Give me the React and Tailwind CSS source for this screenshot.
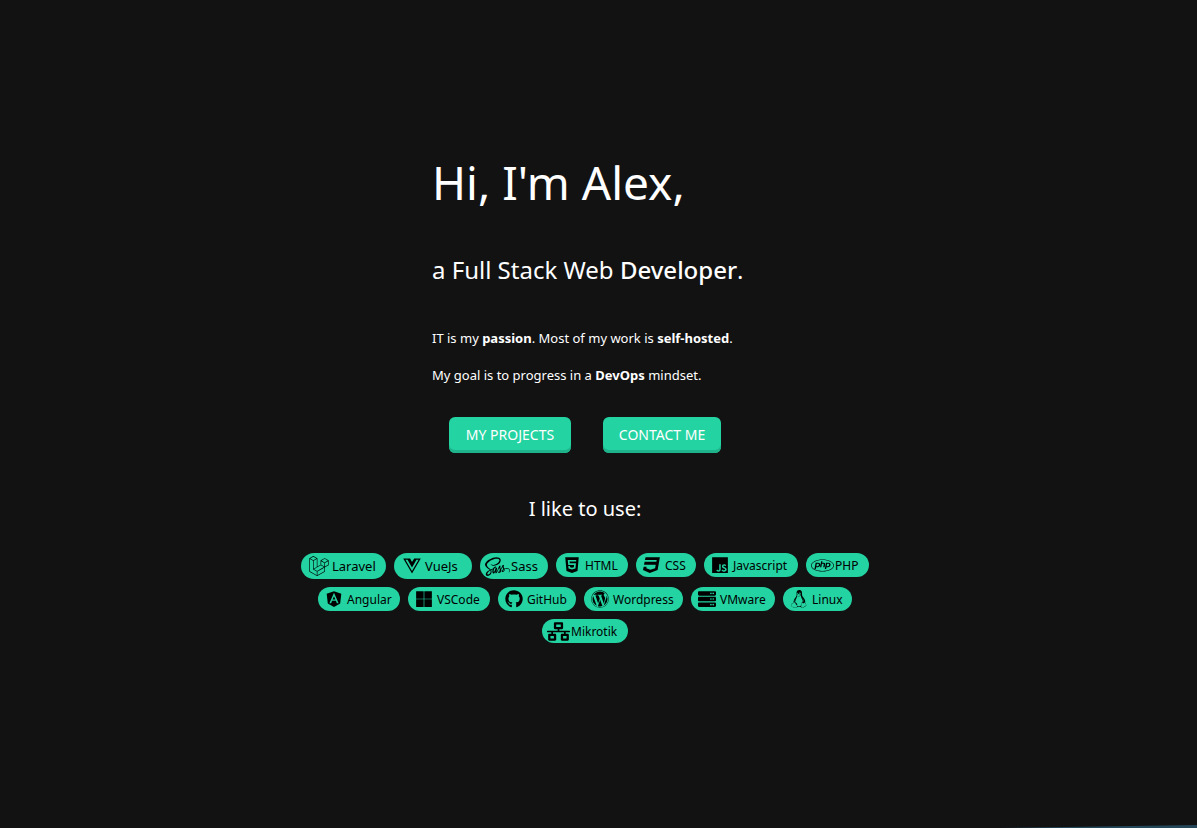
import {
  FaAngular,
  FaCss3,
  FaGithub,
  FaHtml5,
  FaJs,
  FaLaravel,
  FaLinux,
  FaMicrosoft,
  FaNetworkWired,
  FaPhp,
  FaSass,
  FaServer,
  FaVuejs,
  FaWordpress,
} from "react-icons/fa";

const tools = [
  { name: "Laravel", Icon: FaLaravel, size: 20, large: true, width: "w-[85px]" },
  { name: "VueJs", Icon: FaVuejs, size: 20, large: true, width: "w-[78px]" },
  { name: "Sass", Icon: FaSass, size: 25, large: true, width: "w-[68px]" },
  { name: "HTML", Icon: FaHtml5, size: 18, width: "w-[72px]" },
  { name: "CSS", Icon: FaCss3, size: 18, width: "w-[60px]" },
  { name: "Javascript", Icon: FaJs, size: 18, width: "w-[94px]" },
  { name: "PHP", Icon: FaPhp, size: 23, width: "w-[63px]" },
  { name: "Angular", Icon: FaAngular, size: 18, width: "w-[82px]" },
  { name: "VSCode", Icon: FaMicrosoft, size: 18, width: "w-[82px]" },
  { name: "GitHub", Icon: FaGithub, size: 18, width: "w-[78px]" },
  { name: "Wordpress", Icon: FaWordpress, size: 18, width: "w-[99px]" },
  { name: "VMware", Icon: FaServer, size: 18, width: "w-[84px]" },
  { name: "Linux", Icon: FaLinux, size: 18, width: "w-[69px]" },
  { name: "Mikrotik", Icon: FaNetworkWired, size: 23, width: "w-[86px]" },
];

function ActionButton({ width, children }) {
  return (
    <button
      type="button"
      className={`h-9 rounded-md bg-[#23d3a2] pb-px text-[14px] leading-5 whitespace-nowrap text-white uppercase shadow-[inset_0_-3px_0_#1eb38a] ${width}`}
    >
      {children}
    </button>
  );
}

function Chip({ name, Icon, size, large, width }) {
  return (
    <li
      className={`flex items-center rounded-full bg-[#23d3a2] pl-1 whitespace-nowrap text-black ${
        large ? "h-[26px] text-[13px]" : "h-6 text-[12px]"
      } ${width}`}
    >
      <span className={`flex shrink-0 justify-center ${large ? "w-[27px]" : "mr-px w-6"}`}>
        <Icon size={size} aria-hidden="true" className="shrink-0" />
      </span>
      <span className="pt-px">{name}</span>
    </li>
  );
}

export default function App() {
  return (
    <main className="relative flex min-h-screen flex-col items-center overflow-hidden bg-[#121212] pt-[154px] pr-[27px] pb-12 font-['Noto_Sans',sans-serif] text-white">
      <section className="w-[306px] whitespace-nowrap">
        <h1 className="text-[46px] leading-14">Hi, I'm Alex,</h1>
        <h2 className="mt-11 text-[24px] leading-8">
          a Full Stack Web <strong className="font-medium">Developer</strong>.
        </h2>
        <p className="mt-[42px] text-[13px] leading-5">
          IT is my <strong>passion</strong>. Most of my work is <strong>self-hosted</strong>.
        </p>
        <p className="mt-[17px] text-[13px] leading-5">
          My goal is to progress in a <strong>DevOps</strong> mindset.
        </p>
      </section>

      <div className="mt-8 flex gap-8">
        <ActionButton width="w-[122px]">My projects</ActionButton>
        <ActionButton width="w-[118px]">Contact me</ActionButton>
      </div>

      <h3 className="mt-[42px] text-[20px] leading-7">I like to use:</h3>
      <ul className="mt-[30px] flex max-w-[592px] flex-wrap items-start justify-center gap-2">
        {tools.map((tool) => (
          <Chip key={tool.name} {...tool} />
        ))}
      </ul>

      <svg
        aria-hidden="true"
        viewBox="0 0 197 3"
        preserveAspectRatio="none"
        className="absolute right-0 bottom-0 h-[3px] w-[197px]"
      >
        <path d="M0 3L197 0V3Z" fill="#24475a" />
      </svg>
    </main>
  );
}
